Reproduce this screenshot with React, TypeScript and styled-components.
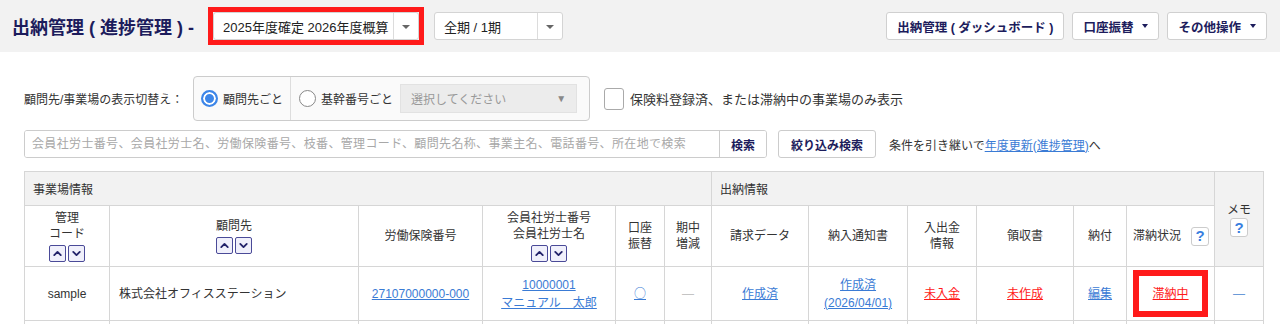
import * as React from "react";
import styled, { createGlobalStyle } from "styled-components";
import { ChevronUp, ChevronDown } from "lucide-react";

const FONT = `"Liberation Sans", "Noto Sans CJK JP", sans-serif`;
const NAVY = "#1c1c5c";
const LINK = "#3a7bd5";
const ALERT = "#ff1a1a";
const LINE = "#d6d6d6";

const GlobalStyle = createGlobalStyle`
  body {
    margin: 0;
    background: #fff;
    font-family: ${FONT};
    color: #333;
  }
`;

const COLUMNS = [85, 249, 124, 133, 49, 47, 97, 99, 69, 97, 53, 88, 49];

const SortButtons: React.FC = () => (
  <SortGroup>
    <SortButton>
      <ChevronUp size={13} strokeWidth={3.4} />
    </SortButton>
    <SortButton>
      <ChevronDown size={13} strokeWidth={3.4} />
    </SortButton>
  </SortGroup>
);

const App: React.FC = () => (
  <>
    <GlobalStyle />
    <Header>
      <Title>出納管理 ( 進捗管理 ) -</Title>
      <HighlightFrame>
        <HeaderSelect $width={206}>
          <span>2025年度確定 2026年度概算</span>
          <SelectArrow />
        </HeaderSelect>
      </HighlightFrame>
      <HeaderSelect $width={129}>
        <span>全期 / 1期</span>
        <SelectArrow />
      </HeaderSelect>
      <Spacer />
      <NavButton>出納管理 ( ダッシュボード )</NavButton>
      <NavButton>
        口座振替 <Caret />
      </NavButton>
      <NavButton>
        その他操作 <Caret />
      </NavButton>
    </Header>

    <Main>
      <FilterRow>
        <FilterLabel>顧問先/事業場の表示切替え：</FilterLabel>
        <RadioGroup>
          <RadioSection>
            <Radio $checked />
            顧問先ごと
          </RadioSection>
          <RadioSection $divided>
            <Radio />
            基幹番号ごと
            <DisabledSelect>
              <span>選択してください</span>
              <span>▼</span>
            </DisabledSelect>
          </RadioSection>
        </RadioGroup>
        <CheckLabel>
          <CheckBox />
          保険料登録済、または滞納中の事業場のみ表示
        </CheckLabel>
      </FilterRow>

      <SearchRow>
        <SearchBox>
          <SearchInput placeholder="会員社労士番号、会員社労士名、労働保険番号、枝番、管理コード、顧問先名称、事業主名、電話番号、所在地で検索" />
          <SearchButton>検索</SearchButton>
        </SearchBox>
        <NarrowButton>絞り込み検索</NarrowButton>
        <Hint>
          条件を引き継いで<Link>年度更新(進捗管理)</Link>へ
        </Hint>
      </SearchRow>

      <Table>
        <colgroup>
          {COLUMNS.map((w, i) => (
            <col key={i} style={{ width: w }} />
          ))}
        </colgroup>
        <thead>
          <GroupRow>
            <GroupCell colSpan={6}>事業場情報</GroupCell>
            <GroupCell colSpan={6}>出納情報</GroupCell>
            <MemoHead rowSpan={2}>
              メモ
              <HelpIcon>?</HelpIcon>
            </MemoHead>
          </GroupRow>
          <HeadRow>
            <HeadCell>
              管理
              <br />
              コード
              <SortButtons />
            </HeadCell>
            <HeadCell>
              顧問先
              <SortButtons />
            </HeadCell>
            <HeadCell>労働保険番号</HeadCell>
            <HeadCell>
              会員社労士番号
              <br />
              会員社労士名
              <SortButtons />
            </HeadCell>
            <HeadCell>
              口座
              <br />
              振替
            </HeadCell>
            <HeadCell>
              期中
              <br />
              増減
            </HeadCell>
            <HeadCell>請求データ</HeadCell>
            <HeadCell>納入通知書</HeadCell>
            <HeadCell>
              入出金
              <br />
              情報
            </HeadCell>
            <HeadCell>領収書</HeadCell>
            <HeadCell>納付</HeadCell>
            <HeadCell>
              <InlineHelp>
                滞納状況
                <HelpIcon>?</HelpIcon>
              </InlineHelp>
            </HeadCell>
          </HeadRow>
        </thead>
        <tbody>
          <DataRow>
            <Cell>sample</Cell>
            <Cell $align="left">株式会社オフィスステーション</Cell>
            <Cell>
              <Link>27107000000-000</Link>
            </Cell>
            <Cell>
              <Link>10000001</Link>
              <br />
              <Link>マニュアル　太郎</Link>
            </Cell>
            <Cell>
              <Link $cjk>○</Link>
            </Cell>
            <Cell>
              <Muted>—</Muted>
            </Cell>
            <Cell>
              <Link>作成済</Link>
            </Cell>
            <Cell>
              <Link>作成済</Link>
              <br />
              <Link>(2026/04/01)</Link>
            </Cell>
            <Cell>
              <Link $alert>未入金</Link>
            </Cell>
            <Cell>
              <Link $alert>未作成</Link>
            </Cell>
            <Cell>
              <Link>編集</Link>
            </Cell>
            <Cell>
              <Highlight>
                <Link $alert>滞納中</Link>
              </Highlight>
            </Cell>
            <Cell>
              <MemoDash>—</MemoDash>
            </Cell>
          </DataRow>
          <DataRow>
            {COLUMNS.map((_, i) => (
              <Cell key={i} />
            ))}
          </DataRow>
        </tbody>
      </Table>
    </Main>
  </>
);

export default App;

const Header = styled.header`
  display: flex;
  align-items: center;
  gap: 8px;
  height: 52px;
  padding: 0 13px 0 12px;
  background: #f2f2f2;
  box-sizing: border-box;
`;

const Title = styled.h1`
  margin: 0 6px 0 0;
  font-size: 18px;
  font-weight: bold;
  color: ${NAVY};
  white-space: nowrap;
`;

const HighlightFrame = styled.div`
  display: flex;
  border: 5px solid ${ALERT};
  margin-right: 2px;
`;

const HeaderSelect = styled.div<{ $width: number }>`
  display: flex;
  align-items: center;
  width: ${p => p.$width}px;
  height: 28px;
  box-sizing: border-box;
  padding-left: 9px;
  background: #fff;
  border: 1px solid #d4d4d4;
  border-radius: 3px;
  font-size: 13px;
  color: #222;

  > span {
    flex: 1;
    white-space: nowrap;
  }
`;

const SelectArrow = styled.div`
  width: 24px;
  height: 100%;
  border-left: 1px solid #dcdcdc;
  position: relative;

  &::after {
    content: "";
    position: absolute;
    left: 8px;
    top: 12px;
    border-left: 4px solid transparent;
    border-right: 4px solid transparent;
    border-top: 4px solid #666;
  }
`;

const Spacer = styled.div`
  flex: 1;
`;

const NavButton = styled.button`
  display: flex;
  align-items: center;
  gap: 9px;
  height: 28px;
  padding: 0 10px;
  background: #fff;
  border: 1px solid #d0d0d0;
  border-radius: 3px;
  font-family: ${FONT};
  font-size: 12.5px;
  font-weight: bold;
  color: ${NAVY};
  white-space: nowrap;
`;

const Caret = styled.span`
  border-left: 3.5px solid transparent;
  border-right: 3.5px solid transparent;
  border-top: 4px solid ${NAVY};
`;

const Main = styled.main`
  padding: 24px 17px 0 24px;
`;

const FilterRow = styled.div`
  display: flex;
  align-items: center;
`;

const FilterLabel = styled.div`
  font-size: 12px;
  color: #333;
  width: 169px;
`;

const RadioGroup = styled.div`
  display: flex;
  height: 45px;
  width: 397px;
  box-sizing: border-box;
  border: 1px solid #ccc;
  border-radius: 4px;
  background: #fafafa;
`;

const RadioSection = styled.label<{ $divided?: boolean }>`
  display: flex;
  align-items: center;
  gap: 4px;
  padding: 0 ${p => (p.$divided ? "8px" : "7px")};
  border-left: ${p => (p.$divided ? "1px solid #ddd" : "none")};
  font-size: 12px;
  color: #333;
  white-space: nowrap;
`;

const Radio = styled.span<{ $checked?: boolean }>`
  width: 17px;
  height: 17px;
  border-radius: 50%;
  box-sizing: border-box;
  border: ${p => (p.$checked ? "2px solid #3d86e8" : "1px solid #888")};
  box-shadow: ${p => (p.$checked ? "inset 0 0 0 2px #fff" : "none")};
  background: ${p => (p.$checked ? "#3d86e8" : "#fff")};
  margin-right: 1px;
`;

const DisabledSelect = styled.div`
  display: flex;
  align-items: center;
  justify-content: space-between;
  width: 177px;
  height: 29px;
  margin-left: 3px;
  padding: 0 10px;
  box-sizing: border-box;
  background: #ececec;
  border: 1px solid #e2e2e2;
  font-size: 12px;
  color: #999;

  > span:last-child {
    font-size: 10px;
    color: #888;
  }
`;

const CheckLabel = styled.label`
  display: flex;
  align-items: center;
  gap: 6px;
  margin-left: 14px;
  font-size: 13px;
  color: #333;
`;

const CheckBox = styled.span`
  width: 20px;
  height: 22px;
  box-sizing: border-box;
  border: 1px solid #aaa;
  border-radius: 3px;
  background: #fff;
`;

const SearchRow = styled.div`
  display: flex;
  align-items: center;
  margin-top: 9px;
`;

const SearchBox = styled.div`
  display: flex;
  width: 743px;
  height: 28px;
  box-sizing: border-box;
  border: 1px solid #ccc;
  border-radius: 3px;
  overflow: hidden;
`;

const SearchInput = styled.input`
  flex: 1;
  border: none;
  padding: 0 7px;
  font-family: ${FONT};
  font-size: 12px;
  letter-spacing: 0.35px;
  outline: none;

  &::placeholder {
    color: #a8a8a8;
  }
`;

const SearchButton = styled.button`
  width: 47px;
  border: none;
  border-left: 1px solid #ccc;
  background: #fff;
  font-family: ${FONT};
  font-size: 12px;
  font-weight: bold;
  color: ${NAVY};
`;

const NarrowButton = styled.button`
  height: 28px;
  margin-left: 11px;
  padding: 0 12px;
  background: #fff;
  border: 1px solid #ccc;
  border-radius: 3px;
  font-family: ${FONT};
  font-size: 12px;
  font-weight: bold;
  color: ${NAVY};
`;

const Hint = styled.div`
  margin-left: 13px;
  font-size: 12px;
  color: #333;
`;

const Link = styled.a<{ $alert?: boolean; $cjk?: boolean }>`
  color: ${p => (p.$alert ? ALERT : LINK)};
  text-decoration: underline;
  cursor: pointer;
  font-family: ${p => (p.$cjk ? `"Noto Sans CJK JP", sans-serif` : "inherit")};
`;

const Table = styled.table`
  margin-top: 13px;
  width: 1239px;
  table-layout: fixed;
  border-collapse: collapse;
  font-size: 12px;
  color: #333;

  td,
  th {
    border: 1px solid ${LINE};
  }
`;

const GroupRow = styled.tr`
  height: 34px;
  background: #f2f2f2;
`;

const GroupCell = styled.th`
  text-align: left;
  font-weight: normal;
  padding: 0 8px;
`;

const MemoHead = styled.th`
  font-weight: normal;
  vertical-align: top;
  padding-top: 30px;
  line-height: 16px;

  > span {
    display: flex;
    margin: 0 auto;
  }
`;

const HeadRow = styled.tr`
  height: 61px;
  background: #fff;
`;

const HeadCell = styled.th`
  font-weight: normal;
  line-height: 16px;
  padding: 4px;
`;

const SortGroup = styled.div`
  display: flex;
  justify-content: center;
  gap: 2px;
  margin-top: 3px;
`;

const SortButton = styled.span`
  display: flex;
  align-items: center;
  justify-content: center;
  width: 17px;
  height: 17px;
  box-sizing: border-box;
  border: 1px solid #4a4a98;
  border-radius: 2px;
  background: #f0f0fb;
  color: #22226a;
`;

const InlineHelp = styled.div`
  display: flex;
  align-items: center;
  justify-content: flex-end;
  gap: 10px;
  padding-right: 1px;
`;

const HelpIcon = styled.span`
  display: inline-flex;
  align-items: center;
  justify-content: center;
  width: 18px;
  height: 19px;
  box-sizing: border-box;
  border: 1px solid #ccc;
  border-radius: 3px;
  background: #fff;
  font-size: 15px;
  font-weight: bold;
  color: #3a7fe0;
`;

const DataRow = styled.tr`
  height: 52px;
`;

const Cell = styled.td<{ $align?: "left" | "center" }>`
  text-align: ${p => p.$align ?? "center"};
  padding: 3px ${p => (p.$align === "left" ? "9px" : "6px")};
  line-height: 18px;
`;

const Muted = styled.span`
  color: #c4c4c4;
`;

const MemoDash = styled.span`
  color: #6a9ad8;
`;

const Highlight = styled.div`
  display: flex;
  align-items: center;
  justify-content: center;
  height: 47px;
  box-sizing: border-box;
  border: 6px solid ${ALERT};
`;
